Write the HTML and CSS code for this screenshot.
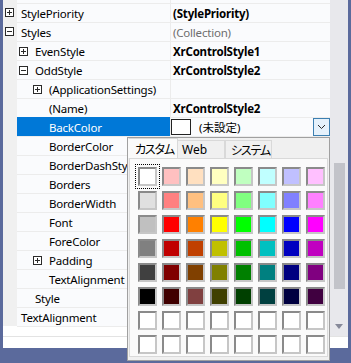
FILE: index.html
```html
<!DOCTYPE html>
<html lang="ja">
<head>
<meta charset="utf-8">
<link rel="stylesheet" href="styles.css">
</head>
<body>
<div class="frame">
  <div class="main">
    <div class="grid">
      <div class="row stub"><div class="gut"></div><div class="name"></div><div class="val"></div></div>
      <div class="row"><div class="gut"><svg class="exp" width="9" height="9"><rect x=".5" y=".5" width="8" height="8" fill="#fff" stroke="#2b2b2b"/><path d="M2 4.5h5M4.5 2v5" stroke="#2b2b2b"/></svg></div><div class="name l0">StylePriority</div><div class="val b">(StylePriority)</div></div>
      <div class="row"><div class="gut"><svg class="exp" width="9" height="9"><rect x=".5" y=".5" width="8" height="8" fill="#fff" stroke="#2b2b2b"/><path d="M2 4.5h5" stroke="#2b2b2b"/></svg></div><div class="name l0">Styles</div><div class="val g">(Collection)</div></div>
      <div class="row"><div class="gut"></div><div class="name l1e"><svg class="exp" width="9" height="9"><rect x=".5" y=".5" width="8" height="8" fill="#fff" stroke="#2b2b2b"/><path d="M2 4.5h5M4.5 2v5" stroke="#2b2b2b"/></svg>EvenStyle</div><div class="val b">XrControlStyle1</div></div>
      <div class="row"><div class="gut"></div><div class="name l1e"><svg class="exp" width="9" height="9"><rect x=".5" y=".5" width="8" height="8" fill="#fff" stroke="#2b2b2b"/><path d="M2 4.5h5" stroke="#2b2b2b"/></svg>OddStyle</div><div class="val b">XrControlStyle2</div></div>
      <div class="row"><div class="gut"></div><div class="name l2e"><svg class="exp" width="9" height="9"><rect x=".5" y=".5" width="8" height="8" fill="#fff" stroke="#2b2b2b"/><path d="M2 4.5h5M4.5 2v5" stroke="#2b2b2b"/></svg>(ApplicationSettings)</div><div class="val"></div></div>
      <div class="row"><div class="gut"></div><div class="name l2">(Name)</div><div class="val b">XrControlStyle2</div></div>
      <div class="row sel"><div class="gut"></div><div class="name l2">BackColor</div><div class="val"><span class="cbox"></span><span class="unset">(未設定)</span><span class="dd"><svg width="9" height="6"><path d="M1 1l3.5 3.5L8 1" fill="none" stroke="#2b2b2b"/></svg></span></div></div>
      <div class="row"><div class="gut"></div><div class="name l2">BorderColor</div><div class="val"></div></div>
      <div class="row"><div class="gut"></div><div class="name l2">BorderDashStyle</div><div class="val"></div></div>
      <div class="row"><div class="gut"></div><div class="name l2">Borders</div><div class="val"></div></div>
      <div class="row"><div class="gut"></div><div class="name l2">BorderWidth</div><div class="val"></div></div>
      <div class="row"><div class="gut"></div><div class="name l2">Font</div><div class="val"></div></div>
      <div class="row"><div class="gut"></div><div class="name l2">ForeColor</div><div class="val"></div></div>
      <div class="row"><div class="gut"></div><div class="name l2e"><svg class="exp" width="9" height="9"><rect x=".5" y=".5" width="8" height="8" fill="#fff" stroke="#2b2b2b"/><path d="M2 4.5h5M4.5 2v5" stroke="#2b2b2b"/></svg>Padding</div><div class="val"></div></div>
      <div class="row"><div class="gut"></div><div class="name l2">TextAlignment</div><div class="val"></div></div>
      <div class="row"><div class="gut"></div><div class="name l1">Style</div><div class="val"></div></div>
      <div class="row"><div class="gut"></div><div class="name l0">TextAlignment</div><div class="val"></div></div>
      <div class="tail"></div>
    </div>
    <div class="scroll"><div class="thumb"></div><div class="arrow"></div></div>
  </div>
  <div class="sep"></div>
  <div class="strip"></div>
</div>

<div class="popup">
  <div class="tabs">
    <div class="tab on">カスタム</div>
    <div class="tab t2">Web</div>
    <div class="tab t3">システム</div>
  </div>
  <div class="panel">
    <div class="swatches">
      <span class="sw focus" style="background:#ffffff"></span><span class="sw" style="background:#ffc0c0"></span><span class="sw" style="background:#ffe0c0"></span><span class="sw" style="background:#ffffc0"></span><span class="sw" style="background:#c0ffc0"></span><span class="sw" style="background:#c0ffff"></span><span class="sw" style="background:#c0c0ff"></span><span class="sw" style="background:#ffc0ff"></span>
      <span class="sw" style="background:#e0e0e0"></span><span class="sw" style="background:#ff8080"></span><span class="sw" style="background:#ffc080"></span><span class="sw" style="background:#ffff80"></span><span class="sw" style="background:#80ff80"></span><span class="sw" style="background:#80ffff"></span><span class="sw" style="background:#8080ff"></span><span class="sw" style="background:#ff80ff"></span>
      <span class="sw" style="background:#c0c0c0"></span><span class="sw" style="background:#ff0000"></span><span class="sw" style="background:#ff8000"></span><span class="sw" style="background:#ffff00"></span><span class="sw" style="background:#00ff00"></span><span class="sw" style="background:#00ffff"></span><span class="sw" style="background:#0000ff"></span><span class="sw" style="background:#ff00ff"></span>
      <span class="sw" style="background:#808080"></span><span class="sw" style="background:#c00000"></span><span class="sw" style="background:#c04000"></span><span class="sw" style="background:#c0c000"></span><span class="sw" style="background:#00c000"></span><span class="sw" style="background:#00c0c0"></span><span class="sw" style="background:#0000c0"></span><span class="sw" style="background:#c000c0"></span>
      <span class="sw" style="background:#404040"></span><span class="sw" style="background:#800000"></span><span class="sw" style="background:#804000"></span><span class="sw" style="background:#808000"></span><span class="sw" style="background:#008000"></span><span class="sw" style="background:#008080"></span><span class="sw" style="background:#000080"></span><span class="sw" style="background:#800080"></span>
      <span class="sw" style="background:#000000"></span><span class="sw" style="background:#400000"></span><span class="sw" style="background:#804040"></span><span class="sw" style="background:#404000"></span><span class="sw" style="background:#004000"></span><span class="sw" style="background:#004040"></span><span class="sw" style="background:#000040"></span><span class="sw" style="background:#400040"></span>
      <span class="sw"></span><span class="sw"></span><span class="sw"></span><span class="sw"></span><span class="sw"></span><span class="sw"></span><span class="sw"></span><span class="sw"></span>
      <span class="sw"></span><span class="sw"></span><span class="sw"></span><span class="sw"></span><span class="sw"></span><span class="sw"></span><span class="sw"></span><span class="sw"></span>
    </div>
  </div>
</div>
</body>
</html>
```

FILE: styles.css
```css
html, body {
  margin: 0;
  padding: 0;
}
body {
  width: 351px;
  height: 363px;
  background: #5b6a9c;
  font-family: "Noto Sans", "Noto Sans CJK JP", sans-serif;
  font-size: 11.5px;
  letter-spacing: -0.2px;
  color: #000;
  overflow: hidden;
  position: relative;
}
.frame {
  margin: 0 3px;
  height: 348px;
  background: #fff;
  display: flex;
  flex-direction: column;
}
.main {
  display: flex;
  height: 336px;
}
.grid {
  width: 327px;
  background: #fff;
}
.row {
  display: flex;
  height: 19px;
  background: #fafbfd;
}
.row.stub {
  height: 3px;
}
.row.stub .name, .row.stub .val {
  border-top: none;
}
.gut {
  flex: none;
  width: 14px;
  background: #f0f0f0;
  display: flex;
  align-items: center;
  padding-left: 2px;
  box-sizing: border-box;
}
.name {
  flex: none;
  width: 153px;
  box-sizing: border-box;
  border-top: 1px solid #ececec;
  display: flex;
  align-items: center;
  white-space: nowrap;
  overflow: hidden;
}
.exp {
  flex: none;
  display: block;
}
.name .exp {
  margin-right: 7px;
}
.l0 { padding-left: 4px; }
.l1 { padding-left: 18px; }
.l1e { padding-left: 2px; }
.l2 { padding-left: 32px; }
.l2e { padding-left: 16px; }
.val {
  flex: 1;
  min-width: 0;
  box-sizing: border-box;
  border-top: 1px solid #ececec;
  border-left: 1px solid #ececec;
  display: flex;
  align-items: center;
  padding-left: 2px;
  white-space: nowrap;
  overflow: hidden;
}
.val.b { font-weight: bold; }
.val.g { color: #6d6d6d; }
.sel .name {
  background: #0078d7;
  border-top-color: #0078d7;
  color: #fff;
}
.sel .val {
  padding-left: 0;
}
.cbox {
  flex: none;
  width: 20px;
  height: 16px;
  box-sizing: border-box;
  border: 1px solid #222;
  background: #fff;
}
.unset {
  margin-left: 8px;
  letter-spacing: 0;
}
.dd {
  flex: none;
  margin-left: auto;
  width: 17px;
  height: 18px;
  box-sizing: border-box;
  border: 1px solid #3c7fb1;
  background: #e5f1fb;
  display: flex;
  align-items: center;
  justify-content: center;
}
.dd svg { display: block; }
.tail {
  margin-left: 14px;
  border-top: 1px solid #ececec;
}
.scroll {
  width: 18px;
  background: #e8e8ec;
  display: flex;
  flex-direction: column;
  align-items: center;
}
.thumb {
  margin-top: 163px;
  width: 11px;
  height: 126px;
  background: #c2c3c9;
}
.arrow {
  margin-top: 35px;
  width: 0;
  height: 0;
  border-left: 4px solid transparent;
  border-right: 4px solid transparent;
  border-top: 5px solid #868999;
}
.sep {
  height: 1px;
  background: #e3e3e3;
}
.strip {
  flex: 1;
  background: #fff;
}
.popup {
  position: absolute;
  left: 127px;
  top: 137px;
  width: 203px;
  height: 224px;
  box-sizing: border-box;
  border: 1px solid #a0a0a0;
  background: #f0f0f0;
}
.tabs {
  display: flex;
  height: 20px;
}
.tab {
  box-sizing: border-box;
  display: flex;
  align-items: center;
  border: 1px solid #d9d9d9;
  border-bottom: none;
  font-size: 12px;
  letter-spacing: -1.2px;
  font-feature-settings: "palt";
  white-space: nowrap;
  overflow: hidden;
  margin-top: 2px;
  background: #f0f0f0;
}
.tab.on {
  width: 50px;
  padding-left: 6px;
  margin-top: 0;
  background: #fafafa;
  border-left-color: #fafafa;
}
.tab.t2 {
  width: 47px;
  padding-left: 4px;
  border-left: none;
  letter-spacing: 0;
}
.tab.t3 {
  width: 47px;
  padding-left: 5px;
  border-left: 1px solid #d9d9d9;
}
.panel {
  margin: 0 1px;
  height: 199px;
  box-sizing: border-box;
  border: 1px solid #d9d9d9;
  background: #fafafa;
  padding: 8px 0 0 8px;
}
.swatches {
  display: grid;
  grid-template-columns: repeat(8, 19px);
  grid-auto-rows: 19px;
  gap: 5px;
}
.sw {
  display: block;
  box-sizing: border-box;
  background: #fff;
  border: 2px solid;
  border-color: #8a8a8a #c6c6c6 #c6c6c6 #8a8a8a;
}
.sw.focus {
  outline: 1px dotted #000;
  outline-offset: 2px;
}
```
